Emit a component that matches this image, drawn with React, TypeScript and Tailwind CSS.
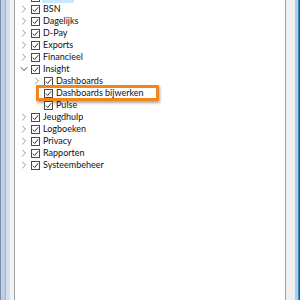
import { ChevronRight, ChevronDown } from 'lucide-react'

type Row = { label: string; level: number; expand: 'closed' | 'open' | 'none'; highlight?: boolean }

const rows: Row[] = [
    { label: 'BSN', level: 0, expand: 'closed' },
    { label: 'Dagelijks', level: 0, expand: 'closed' },
    { label: 'D-Pay', level: 0, expand: 'closed' },
    { label: 'Exports', level: 0, expand: 'closed' },
    { label: 'Financieel', level: 0, expand: 'closed' },
    { label: 'Insight', level: 0, expand: 'open' },
    { label: 'Dashboards', level: 1, expand: 'closed' },
    { label: 'Dashboards bijwerken', level: 1, expand: 'none', highlight: true },
    { label: 'Pulse', level: 1, expand: 'none' },
    { label: 'Jeugdhulp', level: 0, expand: 'closed' },
    { label: 'Logboeken', level: 0, expand: 'closed' },
    { label: 'Privacy', level: 0, expand: 'closed' },
    { label: 'Rapporten', level: 0, expand: 'closed' },
    { label: 'Systeembeheer', level: 0, expand: 'closed' },
]

function Check() {
    return (
        <div className="w-[9px] h-[9px] border border-[#4a4a4a] bg-white flex items-center justify-center shrink-0">
            <svg width="7" height="7" viewBox="0 0 7 7">
                <path d="M0.8 3.6 L2.7 5.5 L6.2 1.2" fill="none" stroke="#333" strokeWidth="1" />
            </svg>
        </div>
    )
}

function TreeRow({ row }: { row: Row }) {
    return (
        <div className={`flex items-center h-[12px] ${row.level === 1 ? 'pl-[17px]' : 'pl-[4px]'}`}>
            <div className="w-[9px] flex items-center justify-center shrink-0">
                {row.expand === 'closed' && <ChevronRight className="w-[12px] h-[12px] text-[#9a9a9a] shrink-0" strokeWidth={2} />}
                {row.expand === 'open' && <ChevronDown className="w-[12px] h-[12px] text-[#4a4a4a] shrink-0" strokeWidth={2} />}
            </div>
            <div className="ml-[3px]">
                <Check />
            </div>
            <span className="ml-[3px] text-[9px] leading-[12px] text-[#111] whitespace-nowrap">{row.label}</span>
        </div>
    )
}

export default function App() {
    return (
        <div className="w-[300px] h-[300px] flex bg-white overflow-hidden" style={{ fontFamily: 'Lato, "Noto Sans", sans-serif' }}>
            <div className="w-[14px] h-full flex shrink-0">
                <div className="w-[1px] bg-[#7d8fa8]" />
                <div className="w-[4px] bg-[#bccfe6]" />
                <div className="w-[1px] bg-[#9fb3cc]" />
                <div className="w-[4px] bg-[#d6dfec]" />
                <div className="w-[4px] bg-[#eff2f7]" />
            </div>
            <div className="w-[1px] bg-[#a0a0a0] shrink-0" />
            <div className="flex-1 relative">
                <div className="-mt-[9px]">
                    <div className="flex items-center h-[12px] pl-[4px]">
                        <div className="w-[9px] shrink-0" />
                        <div className="ml-[3px]"><Check /></div>
                        <div className="ml-[2px] w-[32px] h-[12px] bg-[#cce8ff]" />
                    </div>
                    {rows.map((r) => (
                        <div key={r.label} className="relative">
                            <TreeRow row={r} />
                            {r.highlight && (
                                <div className="absolute left-[21px] top-[-2px] w-[123px] h-[16px] border-[3px] border-[#f0861c] rounded-[1px] shadow-[1px_2px_3px_rgba(0,0,0,0.35)]" />
                            )}
                        </div>
                    ))}
                </div>
            </div>
            <div className="w-[1px] bg-[#a0a0a0] shrink-0" />
            <div className="w-[9px] bg-[#f0f0f0] shrink-0" />
            <div className="w-[3px] bg-[#b0cce6] shrink-0" />
            <div className="w-[1px] bg-[#3d8fc4] shrink-0" />
            <div className="w-[1px] bg-[#1b5878] shrink-0" />
        </div>
    )
}
